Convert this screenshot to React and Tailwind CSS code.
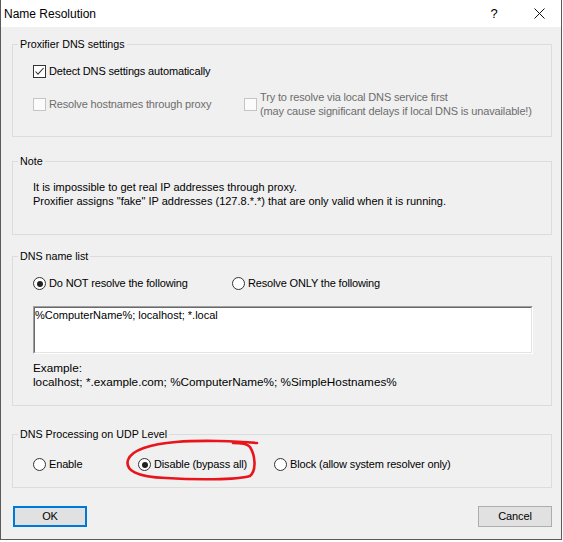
import React from 'react'

const UI = "font-['Liberation_Sans',Arial,sans-serif]"

function CheckBox({ checked, disabled }) {
  return (
    <span
      className={`w-[13px] h-[13px] shrink-0 border flex items-center justify-center ${
        disabled ? 'border-[#c5c5c5] bg-[#fbfbfb]' : 'border-[#333] bg-white'
      }`}
    >
      {checked && (
        <svg width="11" height="11" viewBox="0 0 11 11">
          <path d="M1.5 5.5 L4 8.2 L9.6 2" fill="none" stroke="#333" strokeWidth="1.1" />
        </svg>
      )}
    </span>
  )
}

function Radio({ checked }) {
  return (
    <span className="w-[13px] h-[13px] shrink-0 rounded-full border border-[#333] bg-white flex items-center justify-center">
      {checked && <span className="w-[6px] h-[6px] rounded-full bg-[#222]" />}
    </span>
  )
}

function Group({ title, className, children }) {
  return (
    <fieldset className={`w-[540px] border border-[#dcdcdc] px-0 ${className}`}>
      <legend className="ml-[5px] px-[2px] text-[10.7px] tracking-normal leading-[14px] text-black">{title}</legend>
      {children}
    </fieldset>
  )
}

export default function App() {
  return (
    <div className={`w-[563px] h-[542px] bg-white ${UI}`}>
      <div className="relative w-[562px] h-[540px] border-x border-b border-[#5a5a5a] bg-[#f0f0f0] flex flex-col">
        {/* title bar */}
        <div className="h-[27px] bg-white flex items-center shrink-0">
          <span className="pl-[3px] text-[12px] text-black">Name Resolution</span>
          <div className="ml-auto flex h-full">
            <div className="w-[46px] flex items-center justify-center text-[13px] text-black">?</div>
            <div className="w-[44px] flex items-center justify-center">
              <svg width="11" height="11" viewBox="0 0 11 11">
                <path d="M0.5 0.5 L10.5 10.5 M10.5 0.5 L0.5 10.5" stroke="#111" strokeWidth="1" />
              </svg>
            </div>
          </div>
        </div>

        <div className="flex flex-col pl-[11px] text-[11px] tracking-[-0.15px] text-black">
          <Group title="Proxifier DNS settings" className="mt-[10px] h-[100px]">
            <div className="pl-[20px] pt-[14px]">
              <div className="flex items-center gap-[3px] h-[13px] leading-[13px]">
                <CheckBox checked />
                <span>Detect DNS settings automatically</span>
              </div>
              <div className="flex items-center mt-[12px] h-[28px] text-[#6d6d6d]">
                <div className="w-[211px] flex items-center gap-[3px]">
                  <CheckBox disabled />
                  <span>Resolve hostnames through proxy</span>
                </div>
                <div className="flex items-center gap-[3px]">
                  <CheckBox disabled />
                  <span className="leading-[14px]">
                    Try to resolve via local DNS service first
                    <br />
                    (may cause significant delays if local DNS is unavailable!)
                  </span>
                </div>
              </div>
            </div>
          </Group>

          <Group title="Note" className="mt-[17px] h-[81px]">
            <p className="pl-[20px] pt-[12px] leading-[14px] tracking-normal">
              It is impossible to get real IP addresses through proxy.
              <br />
              Proxifier assigns "fake" IP addresses (127.8.*.*) that are only valid when it is running.
            </p>
          </Group>

          <Group title="DNS name list" className="mt-[14px] h-[157px]">
            <div className="pl-[20px] pt-[14px]">
              <div className="flex items-center h-[13px]">
                <div className="w-[199px] flex items-center gap-[3px]">
                  <Radio checked />
                  <span>Do NOT resolve the following</span>
                </div>
                <div className="flex items-center gap-[3px]">
                  <Radio />
                  <span>Resolve ONLY the following</span>
                </div>
              </div>
              <div className="mt-[16px] w-[500px] h-[48px] border border-t-[#a0a0a0] border-l-[#a0a0a0] border-b-white border-r-white">
                <div className="h-full border border-t-[#696969] border-l-[#696969] border-b-[#e3e3e3] border-r-[#e3e3e3] bg-white">
                  <div className="leading-[14px] tracking-normal">%ComputerName%; localhost; *.local</div>
                </div>
              </div>
              <p className="mt-[7px] text-[11.75px] leading-[14px] tracking-normal">
                Example:
                <br />
                localhost; *.example.com; %ComputerName%; %SimpleHostnames%
              </p>
            </div>
          </Group>

          <Group title="DNS Processing on UDP Level" className="mt-[21px] h-[61px]">
            <div className="pl-[20px] pt-[17px] flex items-center h-[30px]">
              <div className="w-[105px] flex items-center gap-[3px]">
                <Radio />
                <span>Enable</span>
              </div>
              <div className="w-[136px] flex items-center gap-[3px]">
                <Radio checked />
                <span>Disable (bypass all)</span>
              </div>
              <div className="flex items-center gap-[3px]">
                <Radio />
                <span>Block (allow system resolver only)</span>
              </div>
            </div>
          </Group>

          <div className="mt-[18px] w-[540px] flex justify-between">
            <button className="ml-[1px] w-[74px] h-[21px] border-2 border-[#0078d7] bg-[#e1e1e1] text-[11px] leading-none">
              OK
            </button>
            <button className="w-[74px] h-[21px] border border-[#adadad] bg-[#e1e1e1] text-[11px] leading-none">
              Cancel
            </button>
          </div>
        </div>

        {/* hand-drawn highlight around the selected UDP option */}
        <svg className="absolute left-0 top-0 pointer-events-none" width="562" height="540">
          <path
            d="M256 443 C235 441, 200 440, 175 442 C150 444, 130 450, 127 460 C124 470, 135 477, 165 478 C195 480, 235 480, 249 476 C256 470, 254 455, 249 447 C246 443, 238 443, 232 443"
            fill="none"
            stroke="#e8151c"
            strokeWidth="2.6"
            strokeLinecap="round"
            strokeLinejoin="round"
          />
        </svg>
      </div>
    </div>
  )
}
